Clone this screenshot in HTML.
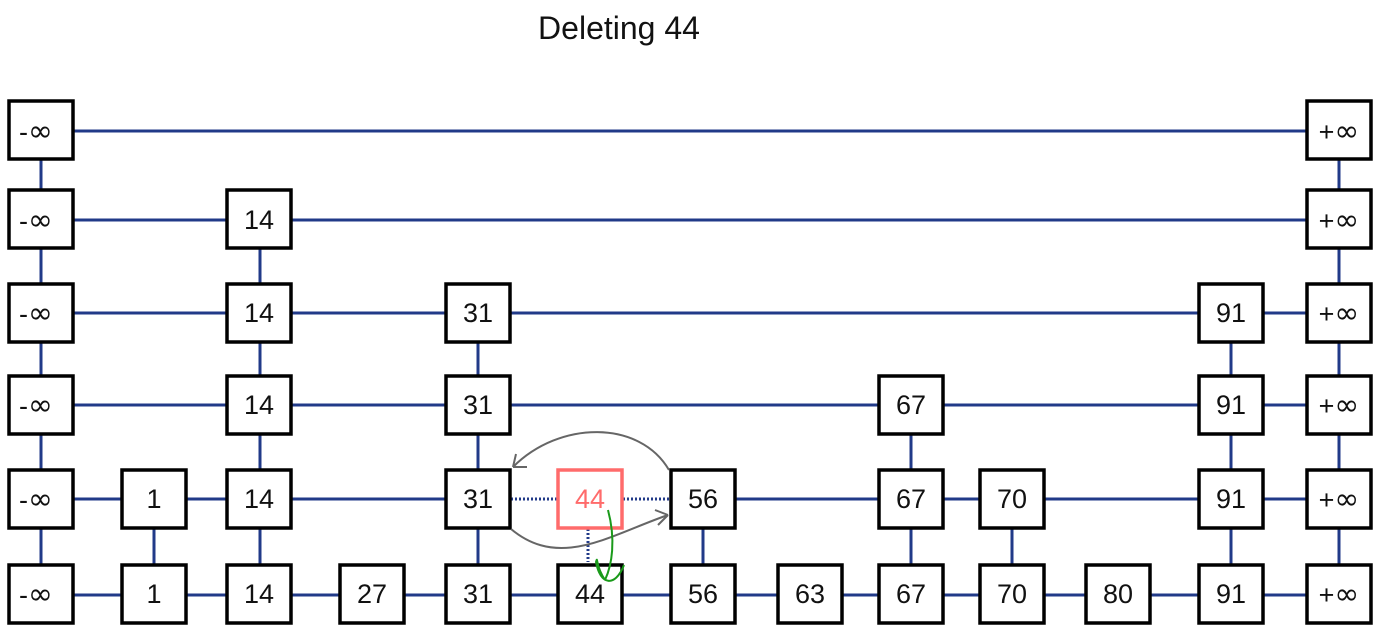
<!DOCTYPE html>
<html><head><meta charset="utf-8"><style>
html,body{margin:0;padding:0;background:#fff;width:1380px;height:634px;overflow:hidden}
svg text{font-family:"Liberation Sans",sans-serif}
.i{font-family:"DejaVu Sans",sans-serif;font-size:30px}
</style></head><body>
<svg width="1380" height="634" viewBox="0 0 1380 634" xmlns="http://www.w3.org/2000/svg">
<text x="619" y="39" font-size="32" text-anchor="middle" fill="#111">Deleting 44</text>
<g stroke="#213a88" stroke-width="3" fill="none">
<line x1="74" y1="131" x2="1306" y2="131"/>
<line x1="74" y1="220" x2="1306" y2="220"/>
<line x1="74" y1="313" x2="1306" y2="313"/>
<line x1="74" y1="405" x2="1306" y2="405"/>
<line x1="74" y1="499" x2="445" y2="499"/>
<line x1="736" y1="499" x2="1306" y2="499"/>
<line x1="74" y1="595" x2="1306" y2="595"/>
<line x1="41" y1="160" x2="41" y2="564"/>
<line x1="1339" y1="160" x2="1339" y2="564"/>
<line x1="260" y1="249" x2="260" y2="564"/>
<line x1="478" y1="342" x2="478" y2="564"/>
<line x1="1231" y1="342" x2="1231" y2="564"/>
<line x1="911" y1="435" x2="911" y2="564"/>
<line x1="154" y1="529" x2="154" y2="564"/>
<line x1="703" y1="529" x2="703" y2="564"/>
<line x1="1012" y1="529" x2="1012" y2="564"/>
</g>
<g stroke="#213a88" stroke-width="3" stroke-dasharray="2,2" fill="none">
<line x1="511" y1="499" x2="557" y2="499"/>
<line x1="623" y1="499" x2="670" y2="499"/>
<line x1="588" y1="529" x2="588" y2="562"/>
</g>
<g stroke="#000" stroke-width="3.5" fill="#fff">
<rect x="9" y="101" width="64" height="58"/>
<rect x="9" y="190" width="64" height="58"/>
<rect x="9" y="284" width="64" height="58"/>
<rect x="9" y="376" width="64" height="58"/>
<rect x="9" y="470" width="64" height="58"/>
<rect x="9" y="565" width="64" height="58"/>
<rect x="1307" y="101" width="64" height="58"/>
<rect x="1307" y="190" width="64" height="58"/>
<rect x="1307" y="284" width="64" height="58"/>
<rect x="1307" y="376" width="64" height="58"/>
<rect x="1307" y="470" width="64" height="58"/>
<rect x="1307" y="565" width="64" height="58"/>
<rect x="227" y="190" width="64" height="58"/>
<rect x="227" y="284" width="64" height="58"/>
<rect x="227" y="376" width="64" height="58"/>
<rect x="227" y="470" width="64" height="58"/>
<rect x="227" y="565" width="64" height="58"/>
<rect x="446" y="284" width="64" height="58"/>
<rect x="446" y="376" width="64" height="58"/>
<rect x="446" y="470" width="64" height="58"/>
<rect x="446" y="565" width="64" height="58"/>
<rect x="1199" y="284" width="64" height="58"/>
<rect x="1199" y="376" width="64" height="58"/>
<rect x="1199" y="470" width="64" height="58"/>
<rect x="1199" y="565" width="64" height="58"/>
<rect x="879" y="376" width="64" height="58"/>
<rect x="879" y="470" width="64" height="58"/>
<rect x="879" y="565" width="64" height="58"/>
<rect x="122" y="470" width="64" height="58"/>
<rect x="122" y="565" width="64" height="58"/>
<rect x="671" y="470" width="64" height="58"/>
<rect x="671" y="565" width="64" height="58"/>
<rect x="980" y="470" width="64" height="58"/>
<rect x="980" y="565" width="64" height="58"/>
<rect x="340" y="565" width="64" height="58"/>
<rect x="558" y="565" width="64" height="58"/>
<rect x="778" y="565" width="64" height="58"/>
<rect x="1086" y="565" width="64" height="58"/>
</g>
<rect x="558" y="470" width="64" height="58" fill="#fff" stroke="#ff6b6b" stroke-width="3.5"/>
<g font-size="27" fill="#111" text-anchor="middle">
<text x="36" y="141">-<tspan class="i">∞</tspan></text><text x="36" y="230">-<tspan class="i">∞</tspan></text><text x="36" y="323">-<tspan class="i">∞</tspan></text><text x="36" y="415">-<tspan class="i">∞</tspan></text><text x="36" y="509">-<tspan class="i">∞</tspan></text><text x="36" y="604">-<tspan class="i">∞</tspan></text>
<text x="1339" y="141">+<tspan class="i">∞</tspan></text><text x="1339" y="230">+<tspan class="i">∞</tspan></text><text x="1339" y="323">+<tspan class="i">∞</tspan></text><text x="1339" y="415">+<tspan class="i">∞</tspan></text><text x="1339" y="509">+<tspan class="i">∞</tspan></text><text x="1339" y="604">+<tspan class="i">∞</tspan></text>
<text x="259" y="229">14</text><text x="259" y="322">14</text><text x="259" y="414">14</text><text x="259" y="508">14</text><text x="259" y="603">14</text>
<text x="478" y="322">31</text><text x="478" y="414">31</text><text x="478" y="508">31</text><text x="478" y="603">31</text>
<text x="1231" y="322">91</text><text x="1231" y="414">91</text><text x="1231" y="508">91</text><text x="1231" y="603">91</text>
<text x="911" y="414">67</text><text x="911" y="508">67</text><text x="911" y="603">67</text>
<text x="154" y="508">1</text><text x="154" y="603">1</text>
<text x="703" y="508">56</text><text x="703" y="603">56</text>
<text x="1012" y="508">70</text><text x="1012" y="603">70</text>
<text x="372" y="603">27</text><text x="590" y="603">44</text><text x="810" y="603">63</text><text x="1118" y="603">80</text>
<text x="590" y="508" fill="#ff6b6b">44</text>
</g>
<g stroke="#666" stroke-width="2" fill="none">
<path d="M669 470 C640 420 560 420 513 467"/>
<path d="M513 467 L527 467 M513 467 L516 454"/>
<path d="M511 529 C560 570 610 535 668 515"/>
<path d="M668 515 L655 510 M668 515 L658 525"/>
</g>
<path d="M608 510 C616 540 612 565 605 580 M605 580 C595 565 598 555 596 562 C600 585 615 588 624 565" stroke="#1a9a1a" stroke-width="2" fill="none"/>
</svg>
</body></html>
